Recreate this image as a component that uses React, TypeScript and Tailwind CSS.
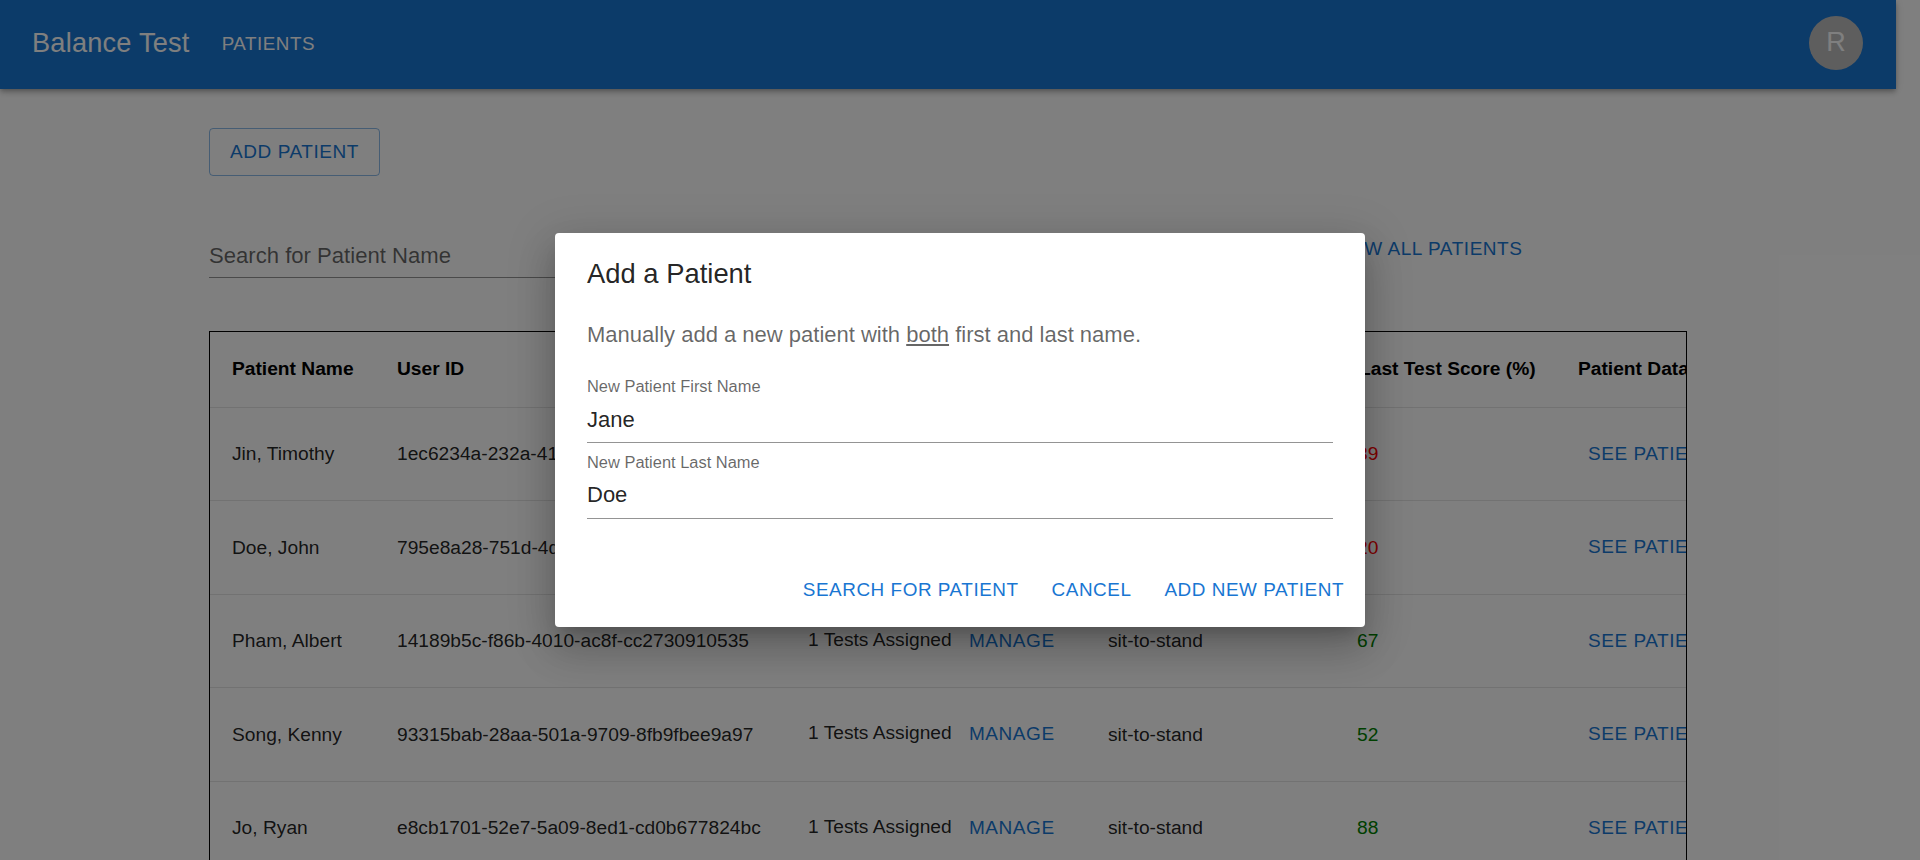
const rows = [
  { name: "Jin, Timothy", id: "1ec6234a-232a-41e8-9c1d-7b2f4a6e1c30", score: "39", good: false },
  { name: "Doe, John", id: "795e8a28-751d-4d0a-8b6e-3fa1c2d97e54", score: "20", good: false },
  { name: "Pham, Albert", id: "14189b5c-f86b-4010-ac8f-cc2730910535", score: "67", good: true },
  { name: "Song, Kenny", id: "93315bab-28aa-501a-9709-8fb9fbee9a97", score: "52", good: true },
  { name: "Jo, Ryan", id: "e8cb1701-52e7-5a09-8ed1-cd0b677824bc", score: "88", good: true },
];

export default function App() {
  return (
    <div className="relative h-[860px] w-[1920px] overflow-hidden bg-white font-['Liberation_Sans',Arial,sans-serif]">
      <header className="flex h-[89px] w-[1896px] items-center bg-[#1976d2] pl-8 pr-8 text-white shadow-[0_2px_4px_-1px_rgba(0,0,0,0.2),0_4px_5px_0_rgba(0,0,0,0.14),0_1px_10px_0_rgba(0,0,0,0.12)]">
        <span className="pb-[3px] text-[27.2px] leading-none tracking-[0.0075em]">Balance Test</span>
        <span className="ml-[32px] pb-[1px] text-[18.8px] leading-none tracking-[0.02857em]">PATIENTS</span>
        <div className="ml-auto mb-[3px] mr-[1px] flex h-[54px] w-[54px] items-center justify-center rounded-full bg-[#bdbdbd] pb-[1px] text-[27px]">R</div>
      </header>

      <main className="pl-[209px]">
        <button className="mt-[39px] h-[48px] w-[171px] rounded border border-[#1976d2]/50 text-[19px] tracking-[0.02857em] text-[#1976d2]">ADD PATIENT</button>

        <div className="mt-[48px] flex w-[1478px] items-start">
          <div className="flex h-[54px] w-[700px] shrink-0 items-center border-b border-black/[0.42] pt-[11px] text-[22.1px] text-black/60">Search for Patient Name</div>
          <span className="ml-[423px] mt-[11px] whitespace-nowrap text-[19px] tracking-[0.02857em] text-[#1976d2]">VIEW ALL PATIENTS</span>
        </div>

        <div className="mt-[53px] w-[1478px] overflow-hidden border border-black">
          <table className="w-[1588px] table-fixed text-left text-[19.2px] text-black/[0.87]">
            <colgroup>
              <col className="w-[187px]" />
              <col className="w-[411px]" />
              <col className="w-[161px]" />
              <col className="w-[139px]" />
              <col className="w-[249px]" />
              <col className="w-[221px]" />
              <col className="w-[220px]" />
            </colgroup>
            <thead>
              <tr className="h-[75px] border-b border-black/10 font-bold text-black">
                <th className="pl-[22px]">Patient Name</th>
                <th>User ID</th>
                <th>Tests Assigned</th>
                <th />
                <th>Test Type</th>
                <th className="whitespace-nowrap pl-[2px]">Last Test Score (%)</th>
                <th className="whitespace-nowrap">Patient Data</th>
              </tr>
            </thead>
            <tbody>
              {rows.map((r) => (
                <tr key={r.name} className="h-[93.5px] border-b border-black/10">
                  <td className="pl-[22px] pt-[2px]">{r.name}</td>
                  <td className="whitespace-nowrap pt-[2px]">{r.id}</td>
                  <td className="whitespace-nowrap pb-[1px]">1 Tests Assigned</td>
                  <td className="text-[19px] tracking-[0.02857em] text-[#1976d2]">MANAGE</td>
                  <td className="pt-[2px]">sit-to-stand</td>
                  <td className={r.good ? "pt-[2px] text-[#008000]" : "pt-[2px] text-[#ff0000]"}>{r.score}</td>
                  <td className="whitespace-nowrap pl-[10px] text-[19px] tracking-[0.02857em] text-[#1976d2]">SEE PATIENT</td>
                </tr>
              ))}
            </tbody>
          </table>
        </div>
      </main>

      <div className="absolute inset-0 flex items-start justify-center bg-black/50 pt-[233px]">
        <div className="flex h-[394px] w-[810px] flex-col rounded bg-white px-8 pt-[21px] shadow-[0_11px_15px_-7px_rgba(0,0,0,0.2),0_24px_38px_3px_rgba(0,0,0,0.14),0_9px_46px_8px_rgba(0,0,0,0.12)]">
          <h2 className="text-[27.4px] leading-[40px] text-black/[0.87]">Add a Patient</h2>
          <p className="mt-[26px] text-[22px] leading-[30px] text-black/60">Manually add a new patient with <u>both</u> first and last name.</p>
          <div className="mt-[26px] w-[746px] border-b border-black/[0.42]">
            <div className="text-[16.45px] leading-[20px] text-black/60">New Patient First Name</div>
            <div className="pb-[7px] pt-[9px] text-[22px] leading-[30px] text-black/[0.87]">Jane</div>
          </div>
          <div className="mt-[9px] w-[746px] border-b border-black/[0.42]">
            <div className="text-[16.45px] leading-[20px] text-black/60">New Patient Last Name</div>
            <div className="pb-[8px] pt-[8px] text-[22px] leading-[30px] text-black/[0.87]">Doe</div>
          </div>
          <div className="-mr-[11px] mt-[57px] flex justify-end gap-[33px] text-[18.9px] tracking-[0.02857em] text-[#1976d2]">
            <span>SEARCH FOR PATIENT</span>
            <span>CANCEL</span>
            <span>ADD NEW PATIENT</span>
          </div>
        </div>
      </div>
    </div>
  );
}
